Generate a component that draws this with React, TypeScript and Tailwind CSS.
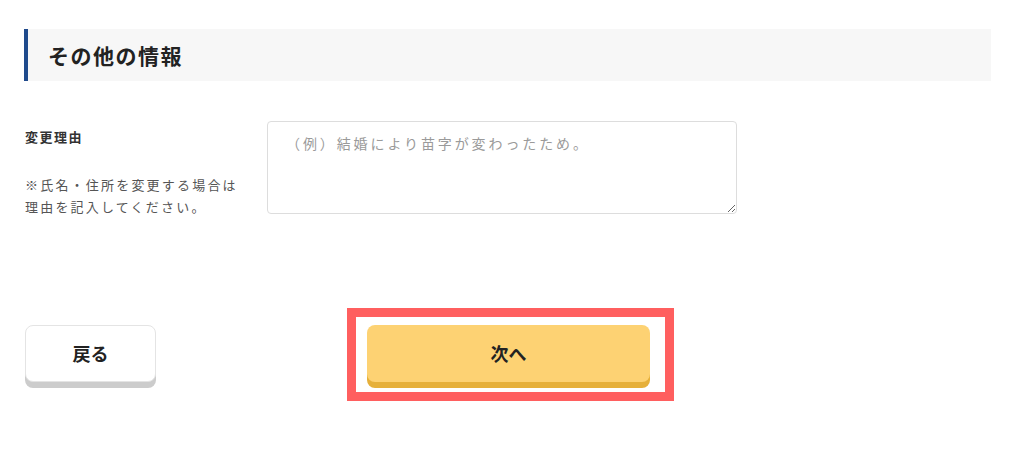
import React from "react"

const font = { fontFamily: '"Noto Sans CJK JP", "Noto Sans", sans-serif' }

export default function App() {
  return (
    <div className="min-h-screen bg-white pl-[24px] pr-[33px] pt-[29px]" style={font}>
      {/* section heading */}
      <div className="flex h-[52px] items-center border-l-[4px] border-[#1f4a8c] bg-[#f7f7f7] pl-[20px]">
        <h2 className="text-[21px] font-bold leading-none tracking-[1.5px] text-[#222]">その他の情報</h2>
      </div>

      {/* form row */}
      <div className="mt-[40px] flex items-start">
        <div className="w-[243px] pl-[1px] pt-[6px]">
          <p className="text-[13px] font-bold leading-[20px] tracking-[1.5px] text-[#333]">変更理由</p>
          <p className="mt-[27px] text-[13px] leading-[22px] tracking-[2.2px] text-[#555]">
            ※氏名・住所を変更する場合は
            <br />
            理由を記入してください。
          </p>
        </div>
        <textarea
          className="h-[93px] w-[470px] rounded-[4px] border border-[#dddddd] pb-[13px] pl-[18px] pr-[25px] pt-[11px] text-[14px] leading-[20px] tracking-[2.9px] text-[#333] outline-none placeholder:text-[#9a9a9a]"
          placeholder="（例）結婚により苗字が変わったため。"
        />
      </div>

      {/* actions */}
      <div className="mt-[90px] flex items-start">
        <button className="ml-[1px] mt-[17px] h-[57px] w-[131px] rounded-[8px] border border-[#e4e4e4] bg-white text-[18px] font-bold text-[#222] shadow-[0_6px_0_#cccccc]">
          戻る
        </button>
        <div className="ml-[191px] border-[9px] border-[#ff5f5f] pb-[10px] pl-[11px] pr-[15px] pt-[8px]">
          <button className="h-[57px] w-[283px] rounded-[8px] bg-[#fdd273] text-[18px] font-bold text-[#222] shadow-[0_6px_0_#e6b03a]">
            次へ
          </button>
        </div>
      </div>
    </div>
  )
}
